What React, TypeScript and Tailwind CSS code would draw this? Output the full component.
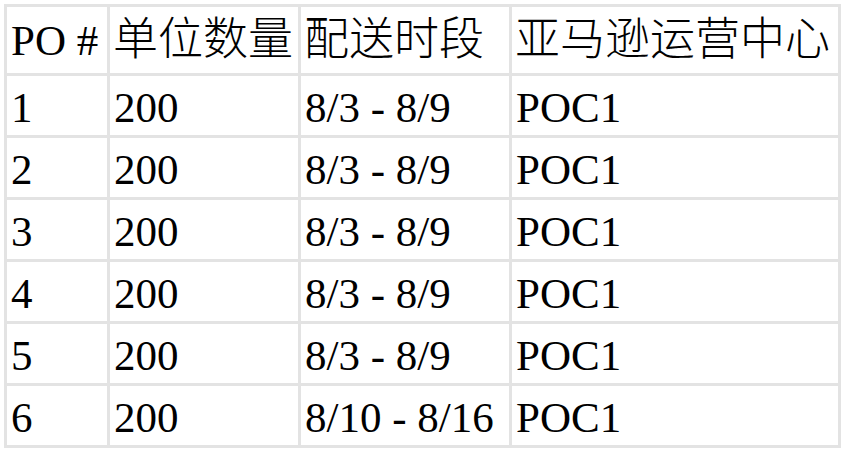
const rows = [
  { po: '1', units: '200', window: '8/3 - 8/9', center: 'POC1' },
  { po: '2', units: '200', window: '8/3 - 8/9', center: 'POC1' },
  { po: '3', units: '200', window: '8/3 - 8/9', center: 'POC1' },
  { po: '4', units: '200', window: '8/3 - 8/9', center: 'POC1' },
  { po: '5', units: '200', window: '8/3 - 8/9', center: 'POC1' },
  { po: '6', units: '200', window: '8/10 - 8/16', center: 'POC1' },
];

export default function App() {
  return (
    <div className="bg-white w-[847px] h-[450px] overflow-hidden pt-[4px] pl-[4px] font-['Liberation_Serif','Noto_Sans_CJK_SC',serif] text-[43px] leading-none text-black">
      <table className="border-separate border-spacing-[3px] bg-[#e3e3e3] table-fixed">
        <colgroup>
          <col className="w-[100px]" />
          <col className="w-[188px]" />
          <col className="w-[208px]" />
          <col className="w-[326px]" />
        </colgroup>
        <thead>
          <tr className="h-[66px]">
            <th className="bg-white text-left font-normal px-[4px] whitespace-nowrap">PO #</th>
            <th className="bg-white text-left font-light text-[45px] px-[3px] whitespace-nowrap">单位数量</th>
            <th className="bg-white text-left font-light text-[45px] px-[3px] whitespace-nowrap">配送时段</th>
            <th className="bg-white text-left font-light text-[45px] px-[3px] whitespace-nowrap">亚马逊运营中心</th>
          </tr>
        </thead>
        <tbody>
          {rows.map((r) => (
            <tr key={r.po} className="h-[59px]">
              <td className="bg-white px-[4px] pt-[3px] whitespace-nowrap">{r.po}</td>
              <td className="bg-white px-[4px] pt-[3px] whitespace-nowrap">{r.units}</td>
              <td className="bg-white px-[4px] pt-[3px] whitespace-nowrap">{r.window}</td>
              <td className="bg-white px-[4px] pt-[3px] whitespace-nowrap">{r.center}</td>
            </tr>
          ))}
        </tbody>
      </table>
    </div>
  );
}
